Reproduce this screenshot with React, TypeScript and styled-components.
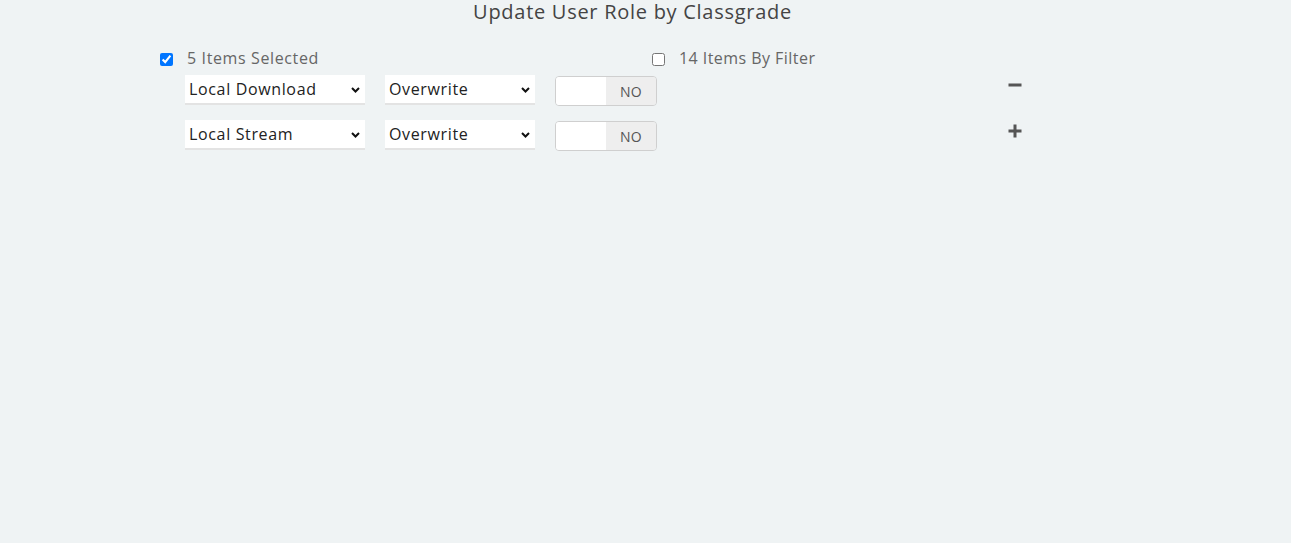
import React from "react";
import styled, { createGlobalStyle } from "styled-components";

const Global = createGlobalStyle`
  html, body { margin: 0; padding: 0; background: #eff3f4; }
  body { font-family: "Open Sans", "Liberation Sans", sans-serif; }
  #root { min-height: 543px; }
`;

const Page = styled.div`
  width: 945px;
  padding-left: 160px;
  padding-top: 0;
`;

const Title = styled.h1`
  margin: 0;
  height: 25px;
  line-height: 24px;
  font-size: 20px;
  font-weight: 400;
  letter-spacing: 0.72px;
  color: #444;
  text-align: center;
`;

const CheckRow = styled.div`
  display: grid;
  grid-template-columns: 492px 1fr;
  margin-top: 20px;
  height: 26px;
  align-items: center;
`;

const CheckLabel = styled.label<{ $ls: number }>`
  display: flex;
  align-items: center;
  font-size: 16px;
  letter-spacing: ${(p) => p.$ls}px;
  color: #666;
  gap: 14px;
  input {
    margin: 0;
    width: 13px;
    height: 13px;
    position: relative;
    top: 1px;
  }
`;

const Rows = styled.div`
  display: flex;
  flex-direction: column;
  gap: 15px;
  margin-top: 4px;
  width: 866px;
`;

const Row = styled.div`
  display: flex;
  align-items: flex-start;
  height: 30px;
  padding-left: 25px;
`;

const Controls = styled.div`
  display: flex;
  gap: 20px;
  align-items: flex-start;
`;

const SelectWrap = styled.div<{ $w: number }>`
  position: relative;
  width: ${(p) => p.$w}px;
  height: 30px;
`;

const Select = styled.select`
  appearance: none;
  -webkit-appearance: none;
  width: 100%;
  height: 30px;
  margin: 0;
  border: none;
  border-bottom: 2px solid #e3e3e3;
  border-radius: 0;
  background: #fff;
  padding: 0 20px 0 4px;
  font-family: inherit;
  font-size: 16px;
  letter-spacing: 0.65px;
  color: #222;
  outline: none;
`;

const Chevron = styled.svg`
  position: absolute;
  right: 5px;
  top: 12px;
  width: 9px;
  height: 6px;
  pointer-events: none;
`;

const Toggle = styled.div`
  display: flex;
  width: 102px;
  height: 30px;
  margin-top: 1px;
  box-sizing: border-box;
  border: 1px solid #cfcfcf;
  border-radius: 4px;
  overflow: hidden;
`;

const ToggleHalf = styled.div<{ $off?: boolean }>`
  flex: 1;
  display: flex;
  align-items: center;
  justify-content: center;
  background: ${(p) => (p.$off ? "#eeeeee" : "#fff")};
  color: #555;
  font-size: 14px;
  letter-spacing: 0.4px;
`;

const Action = styled.button<{ $shift: number }>`
  margin-left: auto;
  margin-top: ${(p) => p.$shift}px;
  width: 22px;
  height: 22px;
  padding: 0;
  border: none;
  background: transparent;
  display: flex;
  align-items: center;
  justify-content: center;
  color: #555;
  cursor: pointer;
`;

function Chev() {
  return (
    <Chevron viewBox="0 0 9 6">
      <path d="M1 1 L4.5 4.5 L8 1" fill="none" stroke="#111" strokeWidth="2" />
    </Chevron>
  );
}

function Line({ a, b, act }: { a: string; b: string; act: "minus" | "plus" }) {
  return (
    <Row>
      <Controls>
        <SelectWrap $w={180}>
          <Select defaultValue={a}>
            <option>{a}</option>
          </Select>
          <Chev />
        </SelectWrap>
        <SelectWrap $w={150}>
          <Select defaultValue={b}>
            <option>{b}</option>
          </Select>
          <Chev />
        </SelectWrap>
        <Toggle>
          <ToggleHalf />
          <ToggleHalf $off>NO</ToggleHalf>
        </Toggle>
      </Controls>
      <Action $shift={act === "minus" ? -1 : 0}>
        <svg width="14" height="14" viewBox="0 0 14 14">
          <rect x="0.5" y="5.5" width="13" height="3" fill="#555" />
          {act === "plus" && <rect x="5.5" y="0.5" width="3" height="13" fill="#555" />}
        </svg>
      </Action>
    </Row>
  );
}

export default function App() {
  return (
    <>
      <Global />
      <Page>
        <Title>Update User Role by Classgrade</Title>
        <CheckRow>
          <CheckLabel $ls={0.62}>
            <input type="checkbox" defaultChecked />
            5 Items Selected
          </CheckLabel>
          <CheckLabel $ls={0.45}>
            <input type="checkbox" />
            14 Items By Filter
          </CheckLabel>
        </CheckRow>
        <Rows>
          <Line a="Local Download" b="Overwrite" act="minus" />
          <Line a="Local Stream" b="Overwrite" act="plus" />
        </Rows>
      </Page>
    </>
  );
}
